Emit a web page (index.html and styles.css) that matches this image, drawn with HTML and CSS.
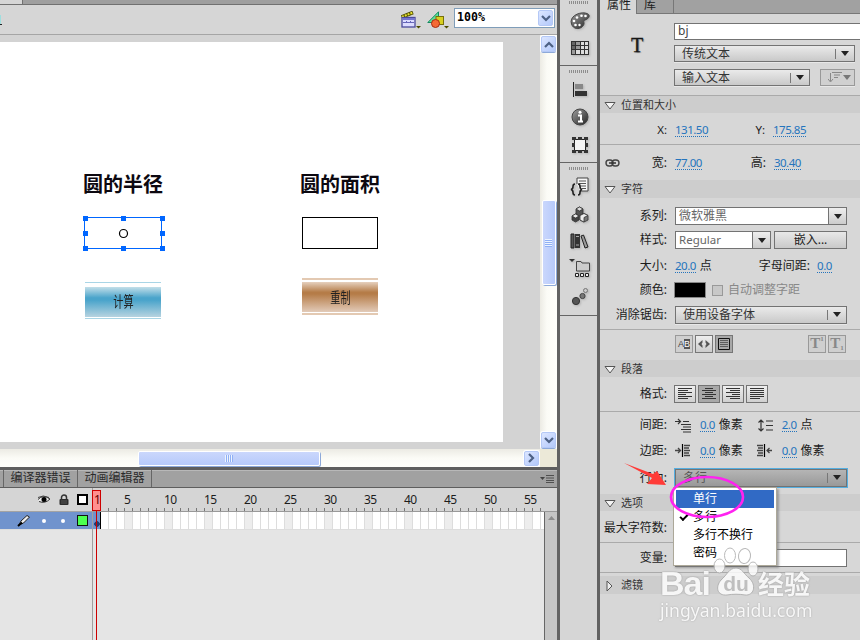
FILE: index.html
```html
<!DOCTYPE html>
<html lang="zh-CN">
<head>
<meta charset="utf-8">
<title>属性</title>
<link rel="stylesheet" href="styles.css">
</head>
<body>
<svg width="0" height="0" class="defs">
  <defs>
    <linearGradient id="steel" x1="0" y1="0" x2="1" y2="1"><stop offset="0" stop-color="#a0a0a0"/><stop offset="1" stop-color="#222"/></linearGradient>
    <symbol id="tri-down" viewBox="0 0 12 10"><path d="M1 1.5H11L6 8Z" fill="#f4f4f4" stroke="#555"/></symbol>
  </defs>
</svg>
<div class="app">
  <main class="work">
    <div class="doc-tabs"><div class="doc-tab"></div></div>
    <div class="toolbar">
      <i class="cursor-mark"></i>
      <svg class="tool" width="20" height="18" viewBox="0 0 20 18"><path d="M.5 6L12 1.500" stroke="#4d4d00" stroke-width="3.800"/><path d="M1 5.800L11.700 1.600" stroke="#e8e030" stroke-width="2" stroke-dasharray="2 1"/><rect x="1" y="6.500" width="13" height="9.500" fill="#dcdcff" stroke="#4a4a9c" stroke-width="1.300"/><path d="M1.500 8H13.500" stroke="#7474d0" stroke-width="2"/><path d="M2 11.500H13M5.500 10V12M9.500 10V12" stroke="#6666b8"/><path d="M15 15H20L17.500 17.500Z" fill="#4c4c00"/></svg>
      <svg class="tool" width="22" height="18" viewBox="0 0 22 18"><path d="M.8 11.500L11.500 .8V11.500Z" fill="#5ee09a" stroke="#138a60"/><rect x="9" y="5.500" width="7.500" height="8" fill="#d8d020" stroke="#77700c"/><circle cx="8.500" cy="12.500" r="4" fill="#f56a35" stroke="#a92c10"/><path d="M17 15H22L19.500 17.500Z" fill="#4c4c00"/></svg>
      <div class="zoom"><span>100%</span><b class="xp-btn"><svg width="10" height="7" viewBox="0 0 10 7"><path d="M1 1L5 5L9 1" fill="none" stroke="#4d6185" stroke-width="2.200"/></svg></b></div>
    </div>
    <div class="stage">
      <div class="pasteboard">
        <div class="canvas">
          <h2 class="item h-radius">圆的半径</h2>
          <h2 class="item h-area">圆的面积</h2>
          <svg class="item selection" width="82" height="34" viewBox="0 0 82 34"><rect x="2.500" y="2.500" width="77" height="31" fill="none" stroke="#0066ff"/><g fill="#0066ff"><path d="M1 1h5v5H1zM39 1h5v5H39zM78 1h5v5H78zM1 16h5v5H1zM78 16h5v5H78zM1 31h5v5H1zM39 31h5v5H39zM78 31h5v5H78z"/></g><circle cx="41.500" cy="18.500" r="4" fill="#fff" stroke="#000" stroke-width="1.200"/></svg>
          <div class="item field-out"></div>
          <div class="item btn calc"><span>计算</span></div>
          <div class="item btn reset"><span>重制</span></div>
        </div>
      </div>
      <div class="vscroll">
        <b class="xp-btn"><svg width="10" height="7" viewBox="0 0 10 7"><path d="M1 6L5 2L9 6" fill="none" stroke="#4d6185" stroke-width="2.200"/></svg></b>
        <b class="thumb"><i></i></b>
        <b class="xp-btn"><svg width="10" height="7" viewBox="0 0 10 7"><path d="M1 1L5 5L9 1" fill="none" stroke="#4d6185" stroke-width="2.200"/></svg></b>
      </div>
    </div>
    <div class="hscroll">
      <b class="thumb"><i></i></b>
      <b class="xp-btn"><svg width="7" height="10" viewBox="0 0 7 10"><path d="M1 1L5 5L1 9" fill="none" stroke="#4d6185" stroke-width="2.200"/></svg></b>
      <b class="corner"></b>
    </div>
    <div class="tl-tabs">
      <span class="tl-first"></span><span>编译器错误</span><span>动画编辑器</span>
      <svg class="panel-menu" width="14" height="8" viewBox="0 0 14 8"><path d="M0 2H5L2.500 5Z" fill="#444"/><path d="M6 .5H14M6 3H14M6 5.500H14M6 7.500H14" stroke="#505050"/></svg>
    </div>
    <div class="timeline">
      <div class="layers">
        <div class="layer-head">
          <svg width="14" height="10" viewBox="0 0 14 10"><path d="M1 4.500Q6 -1 13 4Q8 9 2 6.500" fill="#eee" stroke="#333"/><path d="M1 2.500Q6 -.5 12 2.500" stroke="#444" fill="none"/><circle cx="7" cy="4.500" r="2.500" fill="#000"/></svg>
          <svg width="10" height="12" viewBox="0 0 10 12"><path d="M2.500 6V3.500a2.500 2.500 0 0 1 5 0V6" fill="none" stroke="#333" stroke-width="1.500"/><rect x=".5" y="5" width="9" height="6" rx="1" fill="#2c2c2c"/><path d="M2 7H8M2 9H8" stroke="#777" stroke-width=".6"/></svg>
          <i class="outline-box"></i>
        </div>
        <div class="layer-row">
          <svg width="14" height="13" viewBox="0 0 14 13"><path d="M2 11L4 7L10 1.500L12.500 3L6.500 9Z" fill="#eee" stroke="#222"/><path d="M1 12L5 8.500" stroke="#000" stroke-width="2"/></svg>
          <i class="dot"></i><i class="dot"></i><i class="green-box"></i>
        </div>
      </div>
      <div class="frames">
        <div class="ruler"><span class="one">1</span><span>5</span><span>10</span><span>15</span><span>20</span><span>25</span><span>30</span><span>35</span><span>40</span><span>45</span><span>50</span><span class="last">55</span></div>
        <div class="frame-body">
          <div class="cells"><i class="key"></i></div>
          <div class="tl-scroll"><svg width="7" height="4" viewBox="0 0 7 4"><path d="M0 4L3.500 0L7 4Z" fill="#8c8c8c"/></svg></div>
        </div>
        <div class="playhead"></div>
      </div>
    </div>
  </main>

  <nav class="dock">
    <div class="dock-group g1">
      <i class="grip"></i>
      <svg width="20" height="18" viewBox="0 0 20 18"><path d="M1.500 12C-1 5 8 0 15 1C22 2 19 7 15 8C12 9 16 11 12.500 14.500C9 18 3 17 1.500 12Z" fill="url(#steel)" stroke="#444"/><g fill="#fff"><circle cx="4" cy="9" r="1.300"/><circle cx="7" cy="5.500" r="1.300"/><circle cx="11.500" cy="3.700" r="1.300"/><circle cx="15.500" cy="4" r="1.300"/><circle cx="5.500" cy="13" r="1.300"/><circle cx="9.500" cy="13" r="1.200"/></g></svg>
      <svg width="18" height="14" viewBox="0 0 18 14"><rect width="18" height="14" fill="#333"/><g fill="#666"><path d="M1 1h3v3H1zM1 5h3v3H1z"/></g><g fill="#999"><path d="M5 1h4v3H5zM5 5h4v3H5zM1 9h3v4H1z"/></g><g fill="#ddd"><path d="M10 1h3v3h-3zM14 1h3v3h-3zM10 5h3v3h-3zM14 5h3v3h-3zM5 9h4v4H5zM10 9h3v4h-3zM14 9h3v4h-3z"/></g></svg>
    </div>
    <div class="dock-group g2">
      <i class="grip"></i>
      <svg width="16" height="15" viewBox="0 0 16 15"><path d="M1.500 0V15" stroke="#222"/><rect x="3" y="2" width="8" height="5" fill="#888"/><rect x="3" y="9" width="12" height="5" fill="#333"/></svg>
      <svg width="18" height="18" viewBox="0 0 18 18"><circle cx="9" cy="9" r="8" fill="url(#steel)" stroke="#444"/><path d="M7 7.500H10V13M7 13.500H12" stroke="#fff" stroke-width="2" fill="none"/><circle cx="9" cy="4.300" r="1.500" fill="#fff"/></svg>
      <svg width="16" height="16" viewBox="0 0 16 16"><rect x="2.500" y="2.500" width="11" height="11" fill="#f4f4f4" stroke="#222"/><path d="M0 0h4v3H0zM6 0h4v3H6zM12 0h4v3h-4zM0 6h3v4H0zM13 6h3v4h-3zM0 13h4v3H0zM6 13h4v3H6zM12 13h4v3h-4z" fill="#333"/></svg>
    </div>
    <div class="dock-group g3">
      <i class="grip"></i>
      <svg width="20" height="19" viewBox="0 0 20 19"><path d="M7 7V1H18V14H10" fill="#f6f6f6" stroke="#444"/><path d="M9 4H16M9 6.500H16M9 9H16M12 11.500H16" stroke="#555"/><path d="M5 7Q3 7 3 9.500Q3 12 1 12.500Q3 13 3 15.500Q3 18 5 18M8 7Q10 7 10 9.500Q10 12 12 12.500Q10 13 10 15.500Q10 18 8 18" fill="none" stroke="#222" stroke-width="1.600"/></svg>
      <svg width="18" height="17" viewBox="0 0 18 17"><g stroke="#333" stroke-width=".8"><path d="M5 3L8.500 1L12 3V8L8.500 10L5 8Z" fill="#555"/><path d="M5 3L8.500 1L12 3L8.500 5Z" fill="#ddd"/><path d="M1 10L4.500 8L8 10V14L4.500 16L1 14Z" fill="#444"/><path d="M1 10L4.500 8L8 10L4.500 12Z" fill="#eee"/><path d="M9 9.500L13 7.500L17 9.500V14L13 16L9 14Z" fill="#777"/><path d="M9 9.500L13 7.500L17 9.500L13 11.500V16L9 14Z" fill="#eee"/></g></svg>
      <svg width="19" height="16" viewBox="0 0 19 16"><path d="M1 1H4V15H1Z" fill="#555" stroke="#222"/><path d="M5 1H10V15H5Z" fill="#333"/><path d="M6 3.500H9M6 12H9" stroke="#aaa"/><path d="M11 3L13.500 2L18 14L15 15Z" fill="#999" stroke="#222"/></svg>
      <svg width="22" height="18" viewBox="0 0 22 18"><path d="M0 0H6L3 3Z" fill="#333"/><path d="M7.500 12V2.500H12L13 4H20.500V12Z" fill="#ccc" stroke="#444"/><g fill="#eee" stroke="#222"><path d="M6.500 14.500h3v3h-3zM11.500 14.500h3v3h-3zM16.500 14.500h3v3h-3z"/></g></svg>
      <svg width="18" height="19" viewBox="0 0 18 19"><circle cx="5" cy="14" r="3.600" fill="#555" stroke="#333"/><circle cx="11.500" cy="9" r="2.600" fill="#777" stroke="#444"/><circle cx="14.500" cy="3.500" r="2" fill="#ccc" stroke="#777"/></svg>
    </div>
  </nav>

  <aside class="props">
    <div class="p-tabs"><span class="active">属性</span><span>库</span><b></b></div>
    <div class="head">
      <div class="big-t">T</div>
      <div class="head-fields">
        <div class="input name">bj</div>
        <div class="select w181"><span>传统文本</span><i class="sep"></i><i class="caret"></i></div>
        <div class="pair"><div class="select w136"><span>输入文本</span><i class="sep"></i><i class="caret"></i></div>
        <div class="select dir"><svg width="14" height="11" viewBox="0 0 14 11"><path d="M2.500 1V9M0 7L2.500 10L5 7M4 .5H14M6 3H12M6 5.500H10" fill="none" stroke="#888"/></svg><i class="caret"></i></div></div>
      </div>
    </div>

    <div class="sec first"><svg width="12" height="10"><use href="#tri-down"/></svg>位置和大小</div>
    <div class="row xy"><label>X:</label><a>131.50</a><label class="l2">Y:</label><a>175.85</a></div>
    <div class="row wh"><svg class="link" width="15" height="8" viewBox="0 0 15 8"><rect x="1" y="1" width="7" height="6" rx="3" fill="none" stroke="#444" stroke-width="1.400"/><rect x="7" y="1" width="7" height="6" rx="3" fill="none" stroke="#444" stroke-width="1.400"/><path d="M4 4H11" stroke="#333" stroke-width="1.500"/></svg><label>宽:</label><a>77.00</a><label class="l2">高:</label><a>30.40</a></div>

    <div class="sec"><svg width="12" height="10"><use href="#tri-down"/></svg>字符</div>
    <div class="row family"><label>系列:</label><div class="combo w172"><span>微软雅黑</span><b><i class="caret"></i></b></div></div>
    <div class="row style"><label>样式:</label><div class="combo w96"><span>Regular</span><b><i class="caret"></i></b></div><div class="push">嵌入...</div></div>
    <div class="row size"><label>大小:</label><a>20.0</a><em>点</em><label class="l3">字母间距:</label><a class="near">0.0</a></div>
    <div class="row color"><label>颜色:</label><i class="swatch"></i><i class="check"></i><em class="dim">自动调整字距</em></div>
    <div class="row aa"><label>消除锯齿:</label><div class="select w172"><span>使用设备字体</span><i class="sep"></i><i class="caret"></i></div></div>
    <div class="row tools">
      <b class="tb off"><small>A<u>B</u></small></b>
      <b class="tb"><svg width="12" height="8" viewBox="0 0 12 8"><path d="M4.500 0L0 4L4.500 8V5.500L3.500 4L4.500 2.500ZM7.500 0L12 4L7.500 8V5.500L8.500 4L7.500 2.500Z" fill="#555"/></svg></b>
      <b class="tb on"><svg width="12" height="12" viewBox="0 0 12 12"><path d="M.5 .5H11.500V11.500H.5Z" fill="none" stroke="#111"/><path d="M2 2.500H10M2 4.500H10M2 6.500H10M2 8.500H10" stroke="#555" stroke-width=".9"/></svg></b>
      <b class="tb off sup">T<sup>1</sup></b><b class="tb off sub">T<sub>1</sub></b>
    </div>

    <div class="sec para"><svg width="12" height="10"><use href="#tri-down"/></svg>段落</div>
    <div class="row format"><label>格式:</label>
      <b class="al"><svg width="16" height="12" viewBox="0 0 16 12"><path d="M1 .5H15M1 2.500H11M1 4.500H15M1 6.500H9M1 8.500H15M1 10.500H11" stroke="#333"/></svg></b>
      <b class="al on"><svg width="16" height="12" viewBox="0 0 16 12"><path d="M4 .5H12M1 2.500H15M4 4.500H12M1 6.500H15M4 8.500H12M1 10.500H15" stroke="#333"/></svg></b>
      <b class="al"><svg width="16" height="12" viewBox="0 0 16 12"><path d="M1 .5H15M5 2.500H15M1 4.500H15M7 6.500H15M1 8.500H15M5 10.500H15" stroke="#333"/></svg></b>
      <b class="al"><svg width="16" height="12" viewBox="0 0 16 12"><path d="M1 .5H15M1 2.500H15M1 4.500H15M1 6.500H15M1 8.500H15M1 10.500H11" stroke="#333"/></svg></b>
    </div>
    <div class="row gap"><label>间距:</label><svg width="17" height="15" viewBox="0 0 17 15"><path d="M0 3.500H5M3 1L5.500 3.500L3 6M8 3.500H14M6 6.500H16M8 9H16M6 11.500H16M8 14H16" fill="none" stroke="#333" stroke-width="1.200"/></svg><a>0.0</a><em>像素</em><svg class="r" width="15" height="13" viewBox="0 0 15 13"><path d="M3 1V12M.5 3.500L3 1L5.500 3.500M.5 9.500L3 12L5.500 9.500M8 2H15M8 6.500H15M8 11H15" fill="none" stroke="#333" stroke-width="1.200"/></svg><a class="a2">2.0</a><em>点</em></div>
    <div class="row margin"><label>边距:</label><svg width="17" height="15" viewBox="0 0 17 15"><path d="M0 7.500H5M3 5L5.500 7.500L3 10M9 2.500H15M9 5H14M9 7.500H15M9 10H14M9 12.500H15" fill="none" stroke="#444" stroke-width="1.300"/><path d="M7.500 1V14" stroke="#000" stroke-width="1.200"/></svg><a>0.0</a><em>像素</em><svg class="r" width="17" height="13" viewBox="0 0 17 13"><path d="M1 1.500H7M2 4H7M1 6.500H7M2 9H7M1 11.500H7M16 6.500H11M13.500 4L11 6.500L13.500 9" fill="none" stroke="#444" stroke-width="1.300"/><path d="M8.500 0V13" stroke="#000" stroke-width="1.200"/></svg><a class="a2">0.0</a><em>像素</em></div>
    <div class="row behavior"><label>行为:</label><div class="select w172 open"><span>多行</span><i class="sep"></i><i class="caret"></i></div></div>

    <div class="sec opt"><svg width="12" height="10"><use href="#tri-down"/></svg>选项</div>
    <div class="row maxc"><label>最大字符数:</label></div>
    <div class="row var"><label>变量:</label><div class="input w172"></div></div>
    <div class="sec filt"><svg width="12" height="12" viewBox="0 0 12 12"><path d="M3 1L8 6L3 11Z" fill="#eee" stroke="#555"/></svg>滤镜</div>

    <ul class="menu"><li class="sel">单行</li><li class="checked">多行</li><li>多行不换行</li><li>密码</li></ul>
    <svg class="marks" width="130" height="70" viewBox="0 0 130 70"><path d="M4 3L33 14L37 11L46 25L27 24L32 18Z" fill="#ff3b38"/><ellipse cx="87" cy="37" rx="36" ry="20" fill="none" stroke="#ff22f0" stroke-width="2.600"/></svg>
    <div class="wm">
      <div class="wm-top"><span class="bai">Bai</span>
        <svg width="48" height="51" viewBox="0 0 48 51"><g fill="#fff" stroke="#aaa"><ellipse cx="7.500" cy="20" rx="5.500" ry="7"/><ellipse cx="18" cy="9.500" rx="5.500" ry="7.500"/><ellipse cx="32.500" cy="10" rx="6" ry="7.500" transform="rotate(8 32.500 10)"/><ellipse cx="41" cy="23" rx="5" ry="7"/><path d="M24 22C30 22 32 28 37 32C45 39 42 50 33 49C28 48 20 48 15 49C5 50 3 41 9 34C15 29 17 22 24 22Z"/></g><text x="24" y="45" text-anchor="middle" class="du">du</text></svg>
        <span class="jy">经验</span></div>
      <div class="wm-url">jingyan.baidu.com</div>
    </div>
  </aside>
</div>
</body>
</html>
```

FILE: styles.css
```css
* { box-sizing: border-box; }
body { margin: 0; width: 860px; height: 640px; overflow: hidden; background: #d6d6d6; font: 12px/14px "Noto Sans", "Noto Sans CJK SC", sans-serif; color: #1c1c1c; }
svg { display: block; flex: none; }
i, em, b { font-style: normal; font-weight: normal; flex: none; }
.defs { position: absolute; }
.app { display: flex; width: 860px; height: 640px; }

/* document area */
.work { width: 557px; flex: none; display: flex; flex-direction: column; }
.doc-tabs { height: 5px; background: #9f9f9f; border-bottom: 1px solid #717171; flex: none; }
.doc-tab { width: 23px; height: 4px; background: #d6d6d6; border-right: 1px solid #717171; }
.toolbar { height: 30px; flex: none; display: flex; align-items: flex-start; border-bottom: 1px solid #a5a5a5; padding-top: 3px; }
.cursor-mark { width: 2px; height: 10px; margin: 7px 399px 0 0; background: linear-gradient(90deg, #9fdede 1px, transparent 1px); border-bottom: 1px solid #222; }
.tool { margin: 3px 6px 0 0; }
.tool + .tool { margin-right: 5px; }
.zoom { width: 101px; height: 20px; margin-left: auto; margin-right: 2px; background: #fff; border: 1px solid #7f9db9; display: flex; align-items: center; justify-content: space-between; padding: 0 1px 0 2px; font: bold 11.6px/14px "DejaVu Sans Mono", monospace; color: #000; }
.zoom span { position: relative; top: -1px; }
.xp-btn { width: 15px; height: 16px; border-radius: 2px; border: 1px solid #b4c8f6; background: linear-gradient(135deg, #dce6ff, #b3c9fb); display: flex; align-items: center; justify-content: center; flex: none; }
.stage { flex: none; height: 414px; display: flex; background: #d3d3d3; }
.pasteboard { width: 540px; padding-top: 7px; }
.canvas { position: relative; width: 503px; height: 400px; background: #fff; }
.item { position: absolute; margin: 0; }
.item.h-radius, .item.h-area { top: 128px; left: 83px; font: bold 20px/28px "Noto Sans CJK SC", sans-serif; color: #0c0810; white-space: nowrap; }
.item.h-area { left: 300px; }
.selection { left: 82px; top: 173px; overflow: visible; }
.field-out { left: 302px; top: 175px; width: 76px; height: 32px; border: 1px solid #000; }
.btn { width: 76px; height: 37px; display: flex; align-items: center; justify-content: center; background: linear-gradient(#c3dfe9, #4aa4cb 36%, #4aa4cb 44%, #b7d3e0) 0 4px / 100% 30px no-repeat; border: solid #a9d5e6; border-width: 1px 0; }
.btn span { font: 14.5px/18px "Noto Sans CJK SC", sans-serif; color: #222; transform: scaleX(.7); }
.calc { left: 85px; top: 240px; }
.reset { left: 302px; top: 236px; background-image: linear-gradient(#e6d0bd, #b57c48 34%, #b57c48 40%, #e2cbb9); background-position: 0 2px; border-color: #e3c9b2; border-width: 2px 0; }
.vscroll { width: 17px; display: flex; flex-direction: column; align-items: center; background: linear-gradient(90deg, #ecebe4, #fbfbf6 40%, #fefefa); padding-top: 1px; }
.thumb { border: 1px solid #fff; border-radius: 2px; box-shadow: 1px 1px #8da9d9; display: flex; align-items: center; justify-content: center; flex: none; }
.vscroll .thumb { width: 14px; height: 85px; margin: 148px 0 147px; background: linear-gradient(90deg, #cad7fc, #b7cafb); }
.vscroll .thumb i { width: 7px; height: 8px; background: repeating-linear-gradient(#eef4fe 0 1px, #8fb0f5 1px 2px); }
.vscroll .xp-btn { height: 16px; box-shadow: 0 1px #8da9d9, 0 0 0 1px #fff; }
.hscroll { height: 18px; flex: none; display: flex; align-items: center; background: linear-gradient(#ecebe4, #fbfbf6 50%, #fefefa); }
.hscroll .thumb { width: 182px; height: 15px; margin-left: 138px; background: linear-gradient(#cad7fc, #b7cafb); }
.hscroll .thumb i { width: 8px; height: 7px; background: repeating-linear-gradient(90deg, #eef4fe 0 1px, #8fb0f5 1px 2px); }
.hscroll .xp-btn { margin-left: auto; margin-right: 1px; height: 15px; box-shadow: 0 0 0 1px #fff; }
.corner { width: 17px; height: 18px; background: #ece9d8; }

/* timeline */
.tl-tabs { height: 21px; flex: none; border-top: 3px solid #5e5e5e; border-bottom: 1px solid #5e5e5e; background: #a1a1a1; display: flex; align-items: stretch; color: #2b2b2b; line-height: 16px; box-shadow: inset 0 1px #b8b8b8; }
.tl-tabs span { border-right: 1px solid #666; width: 74px; text-align: center; white-space: nowrap; }
.tl-tabs .tl-first { width: 4px; }
.panel-menu { margin: 5px 3px 0 auto; }
.timeline { flex: 1; display: flex; background: #e5e5e5; }
.layers { width: 92px; flex: none; }
.layer-head { height: 24px; background: #d5d5d5; border-bottom: 1px solid #a3a3a3; display: flex; align-items: center; padding: 0 4px 0 37px; justify-content: space-between; }
.outline-box { width: 11px; height: 11px; border: 2px solid #000; background: #fff; }
.layer-row { height: 18px; background: #7093cd; border-bottom: 1px solid #ddd; display: flex; align-items: center; padding: 0 4px 0 17px; }
.dot { width: 4px; height: 4px; border-radius: 2px; background: #fff; margin-left: 11px; }
.dot + .dot { margin-left: 15px; }
.green-box { width: 11px; height: 11px; background: #4cff50; border: 1px solid #111; margin-left: auto; }
.frames { width: 465px; flex: none; position: relative; border-left: 1px solid #a0a0a0; }
.ruler { height: 24px; border-bottom: 1px solid #999; display: flex; align-items: flex-start; font: 12px/24px "Noto Sans", sans-serif; letter-spacing: -.5px; background: repeating-linear-gradient(90deg, #777 0 1px, transparent 1px 8px) 15px 20px / 437px 3px no-repeat #d5d5d5; }
.ruler span { width: 40px; flex: none; line-height: 24px; }
.ruler .one { width: 31px; text-indent: 1px; position: relative; z-index: 2; color: #600; }
.ruler .last { width: 32px; }
.frame-body { display: flex; height: 128px; }
.cells { width: 451px; height: 18px; border-bottom: 1px solid #ddd; background: repeating-linear-gradient(90deg, transparent 0 7px, #ddd 7px 8px), repeating-linear-gradient(90deg, #fff 0 32px, #ededed 32px 40px); }
.key { display: block; width: 8px; height: 17px; background: radial-gradient(circle at 4px 12px, #223d70 2.5px, transparent 3px) #7093cd; border-right: 1px solid #000; }
.tl-scroll { width: 13px; background: #c5c5c5; border-left: 1px solid #666; display: flex; justify-content: center; padding-top: 4px; }
.playhead { position: absolute; left: -1px; top: 2px; width: 9px; height: 21px; border: 1px solid #cd0000; background: #ff8f8f; }
.playhead::after { content: ""; position: absolute; left: 3px; top: 20px; width: 1px; height: 130px; background: #cd0000; }

/* icon dock */
.dock { width: 43px; flex: none; border: solid #626262; border-width: 0 3px; background: #d6d6d6; }
.dock-group { display: flex; flex-direction: column; align-items: center; border-bottom: 1px solid #666; }
.dock svg { filter: drop-shadow(1px 1px 1px #9999); margin-left: 2px; }
.grip { width: 20px; height: 3px; background: repeating-linear-gradient(90deg, #8d8d8d 0 1px, transparent 1px 2px); }
.g1 { height: 66px; padding-top: 1px; gap: 11px; }
.g1 .grip { margin-bottom: -3px; }
.g2 { height: 97px; padding-top: 4px; gap: 11px; }
.g2 .grip { margin-bottom: -2px; }
.g3 { height: 153px; padding-top: 4px; gap: 10px; }
.g3 .grip { margin-bottom: -3px; }

/* properties */
.props { width: 260px; flex: none; position: relative; display: flex; flex-direction: column; background: #d7d7d7; }
.props > * { flex: none; }
.p-tabs { height: 14px; display: flex; line-height: 10px; }
.p-tabs span { width: 37px; background: #a1a1a1; border-right: 1px solid #777; border-bottom: 1px solid #777; padding-left: 7px; white-space: nowrap; }
.p-tabs .active { background: #d7d7d7; border-bottom: 0; }
.p-tabs b { flex: 1; background: #a1a1a1; border-bottom: 1px solid #777; }
.head { height: 81px; display: flex; }
.big-t { width: 74px; text-align: center; font: 20px/62px "Liberation Serif", serif; -webkit-text-stroke: .3px #111; text-shadow: 1px 1px 1px #888; }
.head-fields { flex: 1; padding-top: 9px; display: flex; flex-direction: column; gap: 5px; }
.head-fields .select { height: 17px; }
.input { height: 18px; background: #fff; border: 1px solid #737373; padding-left: 3px; line-height: 14px; }
.input.name { height: 17px; border-right: 0; color: #444; }
.select { height: 18px; border: 1px solid #737373; background: linear-gradient(#eaeaea, #c9c9c9); display: flex; align-items: center; padding: 0 5px 0 7px; color: #333; box-shadow: 0 1px #e8e8e8; flex: none; }
.select span { flex: 1; line-height: 14px; }
.sep { width: 1px; height: 10px; background: #777; margin-right: 5px; }
.caret { border: 4px solid transparent; border-top: 5px solid #222; border-bottom: 0; }
.w181 { width: 181px; } .w136 { width: 136px; } .w172 { width: 172px; } .w96 { width: 96px; }
.pair { display: flex; gap: 10px; margin-top: 2px; }
.dir { width: 35px; justify-content: space-between; padding: 0 3px 0 7px; border-color: #999; background: #d0d0d0; }
.dir .caret { border-top-color: #777; }
.sec { height: 18px; background: #cdcdcd; display: flex; align-items: center; gap: 5px; padding-left: 4px; line-height: 18px; font-size: 11px; color: #333; }
.sec svg { position: relative; top: 1px; }
.sec.first { border-top: 1px solid #aaa; }
.row { display: flex; align-items: center; }
.row label { width: 67px; text-align: right; margin-right: 8px; flex: none; white-space: nowrap; }
.row a { font: 11.5px/13px "Noto Sans", sans-serif; letter-spacing: -.5px; color: #2474bd; border-bottom: 1px dotted #2474bd; height: 14px; flex: none; }
.row em { margin-left: 4px; }
.row .l2 { width: 57px; }
.xy { height: 32px; padding-top: 2px; border-bottom: 1px solid #aaa; }
.xy label { font-size: 11.5px; }
.wh { height: 35px; }
.wh .l2 { width: 64px; }
.link { margin-left: 5px; margin-right: -20px; }
.family { height: 30px; padding-top: 6px; }
.combo { height: 18px; border: 1px solid #737373; background: #fff; display: flex; color: #666; flex: none; }
.combo span { flex: 1; padding-left: 3px; line-height: 15px; }
.combo b { width: 18px; border-left: 1px solid #737373; background: linear-gradient(#eee, #ccc); display: flex; align-items: center; justify-content: center; }
.style { height: 24px; }
.style .combo { font-size: 11.5px; }
.push { width: 73px; height: 18px; margin-left: 3px; border: 1px solid #737373; background: linear-gradient(#e8e8e8, #c9c9c9); text-align: center; line-height: 15px; }
.size { height: 28px; }
.size .l3 { width: auto; margin-left: 47px; margin-right: 7px; }
.color { height: 20px; }
.swatch { width: 32px; height: 16px; margin-left: -1px; background: #000; border: 1px solid #888; }
.check { width: 11px; height: 11px; margin-left: 6px; border: 1px solid #999; background: #c8c8c8; }
.row .dim { color: #888; margin-left: 5px; }
.aa { height: 30px; border-bottom: 1px solid #aaa; }
.tools { height: 27px; padding-left: 75px; gap: 2px; }
.tb { width: 18px; height: 18px; border: 1px solid #777; background: linear-gradient(#eee, #ccc); display: flex; align-items: center; justify-content: center; }
.tb.on, .al.on { background: #a8a8a8; }
.tb.off { border-color: #999; background: #cfcfcf; color: #888; font: bold 15px/15px "Liberation Serif", serif; }
.tb small { font: 9px/10px "Liberation Sans", sans-serif; color: #444; display: flex; }
.tb small u { text-decoration: none; background: #555; color: #fff; }
.tb sup, .tb sub { font-size: 7px; line-height: 7px; }
.tb sup { align-self: flex-start; } .tb sub { align-self: flex-end; }
.tb.sup { margin-left: 73px; }
.para { margin-top: 3px; height: 17px; }
.format { height: 35px; border-bottom: 1px solid #aaa; }
.al { width: 22px; height: 18px; margin-right: 2px; border: 1px solid #737373; background: linear-gradient(#eee, #d0d0d0); display: flex; align-items: center; justify-content: center; }
.format label { margin-right: 7px; }
.gap { height: 26px; }
.margin { height: 25px; }
.gap svg + a, .margin svg + a { margin-left: 8px; }
.gap .r { margin-left: 15px; }
.margin .r { margin-left: 13px; }
.row .a2.a2 { margin-left: 9px; }
.behavior { height: 29px; }
.open { background: linear-gradient(#b5b5b5, #999); box-shadow: 0 0 0 1px #55aee0; color: #555; }
.opt { margin-top: 2px; height: 17px; }
.maxc { height: 32px; padding-top: 3px; border-bottom: 1px solid #aaa; }
.var { height: 30px; padding-top: 1px; border-bottom: 1px solid #aaa; }
.filt { margin-top: 3px; }

/* overlays */
.menu { position: absolute; left: 73px; top: 487px; width: 104px; height: 79px; margin: 0; padding: 2px; list-style: none; background: #fff; border: 1px solid #aca899; box-shadow: 2px 2px 2px #7779; color: #000; }
.menu li { height: 18px; line-height: 17px; padding-left: 17px; }
.menu .sel { background: #316ac5; color: #fff; }
.menu .checked { position: relative; }
.menu .checked::before { content: ""; position: absolute; left: 4px; top: 6px; width: 6px; height: 3px; border: solid #000; border-width: 0 0 2px 2px; transform: rotate(-45deg); }
.marks { position: absolute; left: 20px; top: 460px; }
.wm { position: absolute; left: 60px; top: 546px; width: 155px; color: #fff; opacity: .82; }
.wm-top { display: flex; height: 54px; align-items: flex-start; }
.bai { width: 51px; font: bold 34px/34px "Liberation Sans", sans-serif; letter-spacing: -1px; padding-top: 20px; text-shadow: 0 0 2px #999, 0 0 1px #aaa; }
.wm-top svg { margin-right: -1px; margin-left: 1px; }
.du { font: bold 21px "Liberation Sans", sans-serif; fill: #bcbcbc; }
.jy { font: bold 26px/30px "Noto Sans CJK SC", sans-serif; padding-top: 22px; margin-left: -1px; text-shadow: 0 0 2px #999, 0 0 1px #aaa; white-space: nowrap; }
.wm-url { font: 17.6px/20px "Noto Sans", sans-serif; text-shadow: 0 0 2px #999; white-space: nowrap; }
```
